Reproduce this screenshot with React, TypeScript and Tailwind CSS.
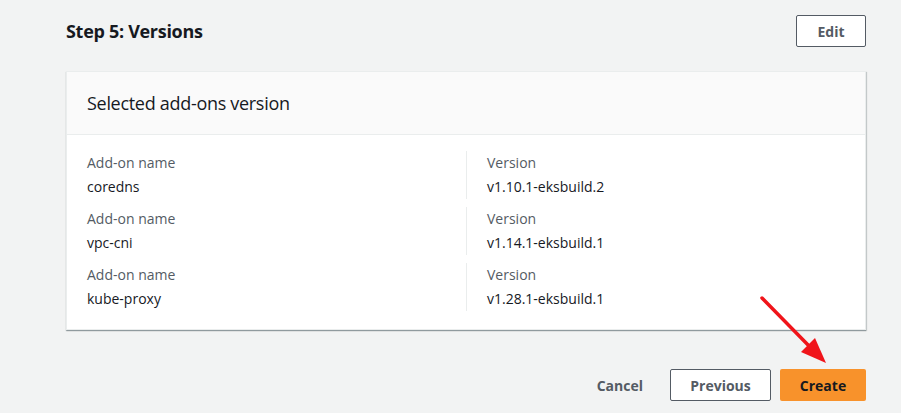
import React from "react"

const addons = [
  { name: "coredns", version: "v1.10.1-eksbuild.2" },
  { name: "vpc-cni", version: "v1.14.1-eksbuild.1" },
  { name: "kube-proxy", version: "v1.28.1-eksbuild.1" },
]

export default function App() {
  return (
    <div
      className="relative w-[901px] h-[413px] bg-[#f2f3f3] overflow-hidden text-[#16191f]"
      style={{ fontFamily: '"Open Sans", "Noto Sans", sans-serif' }}
    >
      <div className="pl-[66px] pr-[35px] pt-[15px]">
        {/* Header */}
        <div className="flex items-center justify-between h-[32px]">
          <h2 className="text-[18px] font-bold tracking-[-0.3px]">Step 5: Versions</h2>
          <button className="h-[32px] w-[70px] bg-white border border-[#545b64] rounded-[2px] text-[14px] font-bold text-[#545b64]">
            Edit
          </button>
        </div>

        {/* Card */}
        <div className="mt-[24px] bg-white border border-[#eaeded] shadow-[0_1px_1px_0_rgba(0,28,36,0.3),1px_1px_1px_0_rgba(0,28,36,0.15)]">
          <div className="h-[63px] bg-[#fafafa] border-b border-[#eaeded] px-[20px] flex items-center">
            <h3 className="text-[18px] tracking-[-0.3px] text-[#16191f]">Selected add-ons version</h3>
          </div>
          <div className="px-[20px] pt-[16px] pb-[18px] flex flex-col gap-[8px]">
            {addons.map((a) => (
              <div key={a.name} className="grid grid-cols-2 text-[14px] leading-[24px]">
                <div>
                  <div className="text-[#545b64]">Add-on name</div>
                  <div>{a.name}</div>
                </div>
                <div className="border-l border-[#eaeded] pl-[20px]">
                  <div className="text-[#545b64]">Version</div>
                  <div>{a.version}</div>
                </div>
              </div>
            ))}
          </div>
        </div>

        {/* Footer actions */}
        <div className="mt-[39px] flex items-center justify-end gap-[9px]">
          <button className="h-[32px] px-[18px] text-[14px] font-bold text-[#545b64]">Cancel</button>
          <button className="h-[32px] w-[101px] bg-white border border-[#545b64] rounded-[2px] text-[14px] font-bold text-[#545b64]">
            Previous
          </button>
          <button className="h-[32px] w-[86px] bg-[#f8922b] rounded-[2px] text-[14px] font-bold text-[#16191f]">
            Create
          </button>
        </div>
      </div>

      {/* Red annotation arrow */}
      <svg className="absolute left-0 top-0 pointer-events-none" width="901" height="413">
        <line x1="762" y1="298" x2="812" y2="349" stroke="#f0141a" strokeWidth="3.5" strokeLinecap="round" />
        <polygon points="826,363 801,352 815,338" fill="#f0141a" />
      </svg>
    </div>
  )
}
